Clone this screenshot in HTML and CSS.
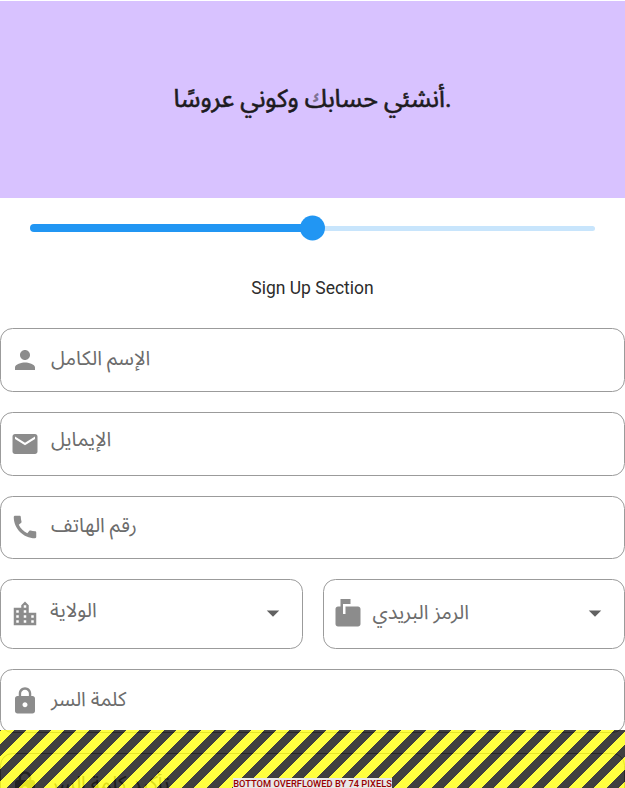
FILE: index.html
```
<!DOCTYPE html>
<html lang="ar">
<head>
<meta charset="utf-8">
<title>Sign Up</title>
<link rel="stylesheet" href="styles.css">
</head>
<body>
<main class="screen">
  <header class="hero"><h1 class="hero-title"><bdi>أنشئي حساب<span class="kaf">ك</span> وكوني عروسًا</bdi><span>.</span></h1></header>
  <div class="slider"><div class="track-active"></div><div class="track-rest"></div><div class="thumb"></div></div>
  <h2 class="section-title">Sign Up Section</h2>
  <form class="form">
    <div class="field name"><svg class="icon" viewBox="0 0 24 24"><path d="M12 12c2.21 0 4-1.79 4-4s-1.79-4-4-4-4 1.79-4 4 1.79 4 4 4zm0 2c-2.67 0-8 1.34-8 4v2h16v-2c0-2.66-5.33-4-8-4z"/></svg><label class="label">الإسم الكامل</label></div>
    <div class="field email"><svg class="icon" viewBox="0 0 24 24"><path d="M20 4H4c-1.1 0-1.99.9-1.99 2L2 18c0 1.1.9 2 2 2h16c1.1 0 2-.9 2-2V6c0-1.1-.9-2-2-2zm0 4l-8 5-8-5V6l8 5 8-5v2z"/></svg><label class="label">الإيمايل</label></div>
    <div class="field phone"><svg class="icon" viewBox="0 0 24 24"><path d="M20.01 15.38c-1.23 0-2.42-.2-3.53-.56-.35-.12-.74-.03-1.01.24l-1.57 1.97c-2.83-1.35-5.48-3.9-6.89-6.83l1.95-1.66c.27-.28.35-.67.24-1.02-.37-1.11-.56-2.3-.56-3.53 0-.54-.45-.99-.99-.99H4.19C3.65 3 3 3.24 3 3.99 3 13.28 10.73 21 20.01 21c.71 0 .99-.63.99-1.18v-3.45c0-.54-.45-.99-.99-.99z"/></svg><label class="label">رقم الهاتف</label></div>
    <div class="row">
      <div class="field select state"><svg class="icon" viewBox="0 0 24 24"><path d="M15 11V5l-3-3-3 3v2H3v14h18V11h-6zm-8 8H5v-2h2v2zm0-4H5v-2h2v2zm0-4H5V9h2v2zm6 8h-2v-2h2v2zm0-4h-2v-2h2v2zm0-4h-2V9h2v2zm0-4h-2V5h2v2zm6 12h-2v-2h2v2zm0-4h-2v-2h2v2z"/></svg><label class="label">الولاية</label><svg class="arrow" viewBox="0 0 24 24"><path d="M7 10l5 5 5-5z"/></svg></div>
      <div class="field select postal"><svg class="icon" viewBox="0 0 24 24"><path d="M20 6H10v6H8V4h6V0H6v6H4c-1.1 0-2 .9-2 2v12c0 1.1.9 2 2 2h16c1.1 0 2-.9 2-2V8c0-1.1-.9-2-2-2z"/></svg><label class="label">الرمز البريدي</label><svg class="arrow" viewBox="0 0 24 24"><path d="M7 10l5 5 5-5z"/></svg></div>
    </div>
    <div class="field password"><svg class="icon" viewBox="0 0 24 24"><path d="M18 8h-1V6c0-2.76-2.24-5-5-5S7 3.24 7 6v2H6c-1.1 0-2 .9-2 2v10c0 1.1.9 2 2 2h12c1.1 0 2-.9 2-2V10c0-1.1-.9-2-2-2zm-6 9c-1.1 0-2-.9-2-2s.9-2 2-2 2 .9 2 2-.9 2-2 2zm3.1-9H8.9V6c0-1.71 1.39-3.1 3.1-3.1s3.1 1.39 3.1 3.1v2z"/></svg><label class="label">كلمة السر</label></div>
    <div class="field confirm"><svg class="icon" viewBox="0 0 24 24"><path d="M18 8h-1V6c0-2.76-2.24-5-5-5S7 3.24 7 6v2H6c-1.1 0-2 .9-2 2v10c0 1.1.9 2 2 2h12c1.1 0 2-.9 2-2V10c0-1.1-.9-2-2-2zm-6 9c-1.1 0-2-.9-2-2s.9-2 2-2 2 .9 2 2-.9 2-2 2zm3.1-9H8.9V6c0-1.71 1.39-3.1 3.1-3.1s3.1 1.39 3.1 3.1v2z"/></svg><label class="label">تأكيد كلمة السر</label></div>
  </form>
  <div class="overflow"><span class="overflow-text">BOTTOM OVERFLOWED BY 74 PIXELS</span></div>
</main>
</body>
</html>
```
FILE: styles.css
```
* { box-sizing: border-box; }
body { margin: 0; background: #fff; font-family: Roboto, "Noto Sans Arabic", "Noto Sans Arabic UI", "Noto Sans", sans-serif; }
.screen { position: relative; width: 625px; height: 788px; overflow: hidden; padding-top: 1px; }
.hero { position: relative; height: 197px; padding-bottom: 2px; background: #d8c2ff; display: flex; align-items: center; justify-content: center; }
/* softens the small mark inside the final kaf */
.hero::after { content: ""; position: absolute; left: 312px; top: 92px; width: 8px; height: 10px; border-radius: 3px; background: rgba(216, 194, 255, .5); }
.hero-title { margin: 0; font-size: 25px; font-weight: 400; -webkit-text-stroke: 0.6px #1d1b20; color: #1d1b20; direction: ltr; white-space: nowrap; }
.slider { position: relative; height: 60px; padding: 0 30px; display: flex; align-items: center; }
.track-active { width: 282.5px; height: 7.5px; background: #2196f3; border-radius: 4px 0 0 4px; }
.track-rest { width: 282.5px; height: 5px; background: #c8e5fc; border-radius: 0 3px 3px 0; }
.thumb { position: absolute; left: 300px; top: 17px; width: 25px; height: 25px; border-radius: 50%; background: #2196f3; transform: translateY(.5px); }
.section-title { margin: 0; height: 70px; line-height: 60px; font-size: 17.5px; font-weight: 400; color: #2c2c2c; text-align: center; }
.form { display: flex; flex-direction: column; gap: 20px; }
.field { height: 63.75px; flex: none; border: 1.25px solid #9b9b9b; border-radius: 12.5px; padding-left: 9px; display: flex; align-items: center; }
.row { display: grid; grid-template-columns: 1fr 1fr; gap: 20px; }
.select { height: 70px; }
.icon, .arrow { width: 30px; height: 30px; flex: none; fill: #8c8c8c; }
.arrow { margin-left: auto; margin-right: 14px; margin-bottom: 2px; fill: #616161; }
.label { margin-left: 11px; margin-bottom: 3px; font-size: 20px; font-weight: 400; line-height: 30px; color: #6c6c6c; white-space: nowrap; direction: rtl; }
.email .label { margin-bottom: 9px; }
.phone .label, .password .label { margin-bottom: 5px; }
.state .label { margin-left: 10px; margin-bottom: 9px; }
.postal .label { margin-left: 10px; margin-bottom: 5px; }
.overflow { position: absolute; left: 0; right: 0; top: 730px; height: 58px; display: flex; align-items: flex-end; justify-content: center; background: repeating-linear-gradient(135deg, rgba(0,0,0,.75) 0 1.2px, rgba(255,255,0,.75) 1.2px 10.04px, rgba(0,0,0,.75) 10.04px 17.678px); }
.overflow-text { height: 10px; line-height: 12px; font-size: 9.3px; font-weight: 500; color: #900; background: #e8e8e8; white-space: nowrap; }
```
